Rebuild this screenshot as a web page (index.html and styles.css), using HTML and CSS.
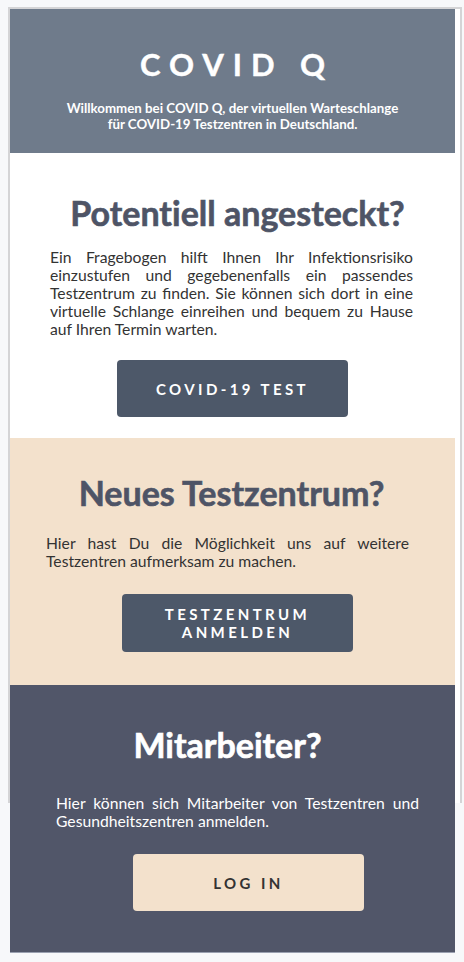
FILE: index.html
```html
<!DOCTYPE html>
<html lang="de">
<head>
<meta charset="utf-8">
<title>COVID Q</title>
<link rel="stylesheet" href="styles.css">
</head>
<body>
<div class="frame">
  <header class="hero">
    <h1 class="brand">COVID Q</h1>
    <p class="tagline">Willkommen bei COVID Q, der virtuellen Warteschlange<br>für COVID-19 Testzentren in Deutschland.</p>
  </header>
  <section class="block block-test">
    <h2 class="block-title">Potentiell angesteckt?</h2>
    <p class="block-text">Ein Fragebogen hilft Ihnen Ihr Infektionsrisiko einzustufen und gegebenenfalls ein passendes Testzentrum zu finden. Sie können sich dort in eine virtuelle Schlange einreihen und bequem zu Hause auf Ihren Termin warten.</p>
    <a class="btn btn-dark btn-test" href="#">COVID-19 TEST</a>
  </section>
  <section class="block block-center">
    <h2 class="block-title">Neues Testzentrum?</h2>
    <p class="block-text">Hier hast Du die Möglichkeit uns auf weitere Testzentren aufmerksam zu machen.</p>
    <a class="btn btn-dark btn-center" href="#">TESTZENTRUM<br>ANMELDEN</a>
  </section>
  <section class="block block-staff">
    <h2 class="block-title">Mitarbeiter?</h2>
    <p class="block-text">Hier können sich Mitarbeiter von Testzentren und Gesundheitszentren anmelden.</p>
    <a class="btn btn-light btn-login" href="#">LOG IN</a>
  </section>
</div>
</body>
</html>
```

FILE: styles.css
```css
* { box-sizing: border-box; }

html {
  background: #f7f8fa;
}

body {
  margin: 0;
  padding: 0;
  font-family: Lato, "Open Sans", sans-serif;
}

.frame {
  position: relative;
  margin: 7px 0 0 8px;
  width: 450px;
  padding: 2px 3px 0 2px;
}

/* the card outline that ends before the last section */
.frame::before {
  content: "";
  position: absolute;
  left: 0;
  top: 0;
  width: 100%;
  height: 794px;
  border: 2px solid #d4d4d6;
  border-bottom: none;
  background: #fff;
  z-index: -1;
}

.hero {
  background: #6f7b8b;
  color: #fff;
  text-align: center;
  padding: 37px 0 21px;
}

.brand {
  margin: 0;
  font-size: 31px;
  line-height: 36px;
  font-weight: 700;
  letter-spacing: 9px;
  padding-left: 9px;
  -webkit-text-stroke: 0.4px currentColor;
}

.tagline {
  margin: 18px 0 0;
  font-size: 13.3px;
  line-height: 16px;
  font-weight: 700;
}

.block {
  display: flex;
  flex-direction: column;
  align-items: center;
}

.block-title {
  margin: 0;
  font-size: 34px;
  line-height: 40px;
  font-weight: 700;
  color: #4e5466;
  font-variant-ligatures: none;
  -webkit-text-stroke: 0.6px currentColor;
}

.block-text {
  margin: 0;
  width: 363px;
  font-size: 15.7px;
  line-height: 18px;
  text-align: justify;
  color: #333;
}

.btn {
  display: flex;
  align-items: center;
  justify-content: center;
  width: 231px;
  height: 57px;
  border-radius: 4px;
  text-decoration: none;
  font-size: 15px;
  line-height: 18px;
  font-weight: 700;
  letter-spacing: 3.4px;
  text-align: center;
}

.btn-dark { background: #4d5869; color: #fff; }
.btn-light { background: #f3e1cc; color: #333; }

.block-test {
  background: #fff;
  padding: 40px 0 21px;
}
.block-test .block-title { transform: translateX(5px); }
.block-test .block-text { margin: 15px 0 0; transform: translateX(-1px); }
.btn-test { margin-top: 22px; }

.block-center {
  background: #f3e1cc;
  padding: 35px 0 33px;
}
.block-center .block-title { transform: translateX(-1px); }
.block-center .block-text { margin: 21px 0 0; transform: translateX(-5px); }
.btn-center { margin-top: 24px; height: 58px; transform: translateX(5px); }

.block-staff {
  background: #515669;
  padding: 40px 0 41px;
  border-bottom: 1px solid #9aa0b0;
}
.block-staff .block-title { color: #fff; transform: translateX(-5px); }
.block-staff .block-text { margin: 29px 0 0; color: #fff; transform: translateX(5px); }
.btn-login { margin-top: 24px; transform: translateX(16px); }
```
